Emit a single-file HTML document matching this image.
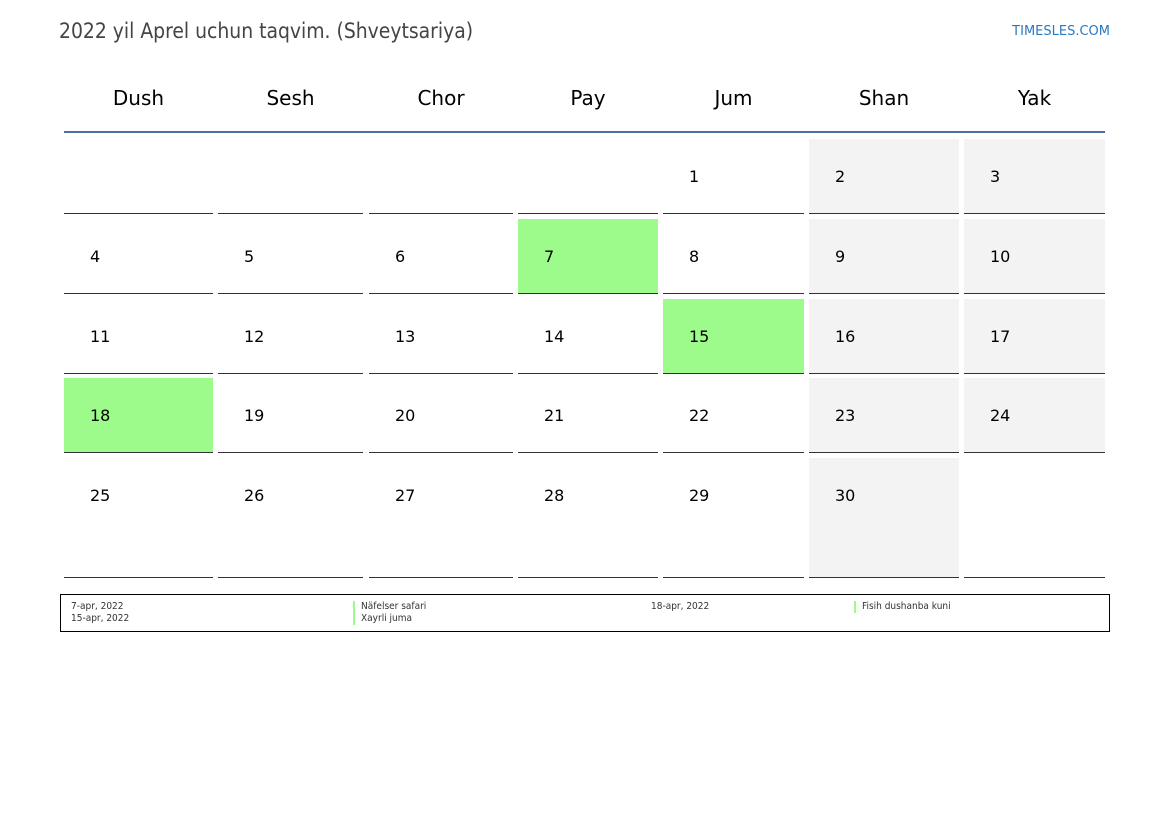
<!DOCTYPE html>
<html><head><meta charset="utf-8"><style>
body{margin:0;width:1169px;height:827px;background:#fff;position:relative;font-family:"DejaVu Sans","Liberation Sans",sans-serif;overflow:hidden}
.a{position:absolute}
.t{left:59px;top:19px;font-size:20.9px;color:#444;font-family:"DejaVu Sans Condensed","DejaVu Sans",sans-serif;font-stretch:condensed}
.l{right:59px;top:24px;font-size:13px;color:#2a7ac0}
.h{top:86px;font-size:20px;color:#000;text-align:center}
.c{border-bottom:1px solid #333;box-sizing:border-box}
.n{font-size:16px;color:#000}
.g{background:#f3f3f3}
.gr{background:#9cfb8a}
.lg{font-size:10px;color:#333;line-height:12px;font-family:"DejaVu Sans Condensed","DejaVu Sans",sans-serif;font-stretch:condensed}
.bar{border-left:2px solid #9cfb8a;padding-left:6px}
</style></head><body>
<div class="a t">2022 yil Aprel uchun taqvim. (Shveytsariya)</div>
<div class="a l">TIMESLES.COM</div>
<div class="a h" style="left:64px;width:149px">Dush</div>
<div class="a h" style="left:218px;width:145px">Sesh</div>
<div class="a h" style="left:369px;width:144px">Chor</div>
<div class="a h" style="left:518px;width:140px">Pay</div>
<div class="a h" style="left:663px;width:141px">Jum</div>
<div class="a h" style="left:809px;width:150px">Shan</div>
<div class="a h" style="left:964px;width:141px">Yak</div>
<div class="a" style="left:64px;top:131px;width:1041px;height:2px;background:#4a6fa0"></div>
<div id="grid"></div>
<script>
var cx=[64,218,369,518,663,809,964],cw=[149,145,144,140,141,150,141];
var ry=[139,219,299,378,458],rh=[75,75,75,75,120];
var days=[["","","","",1,2,3],[4,5,6,7,8,9,10],[11,12,13,14,15,16,17],[18,19,20,21,22,23,24],[25,26,27,28,29,30,""]];
var green={7:1,15:1,18:1},h="";
for(var r=0;r<5;r++)for(var c=0;c<7;c++){var d=days[r][c];var cls="a c";
if(green[d])cls+=" gr";else if(c==5||(c==6&&d!==""))cls+=" g";
h+='<div class="'+cls+'" style="left:'+cx[c]+'px;top:'+ry[r]+'px;width:'+cw[c]+'px;height:'+rh[r]+'px"></div>';
if(d!=="")h+='<div class="a n" style="left:'+(cx[c]+26)+'px;top:'+(ry[r]+28)+'px">'+d+'</div>';}
document.getElementById("grid").innerHTML=h;
</script>
<div class="a" style="left:60px;top:594px;width:1048px;height:36px;border:1px solid #000"></div>
<div class="a lg" style="left:71px;top:601px">7-apr, 2022<br>15-apr, 2022</div>
<div class="a lg" style="left:353px;top:601px"><div class="bar">Näfelser safari</div><div class="bar">Xayrli juma</div></div>
<div class="a lg" style="left:651px;top:601px">18-apr, 2022</div>
<div class="a lg" style="left:854px;top:601px"><div class="bar">Fisih dushanba kuni</div></div>
</body></html>
